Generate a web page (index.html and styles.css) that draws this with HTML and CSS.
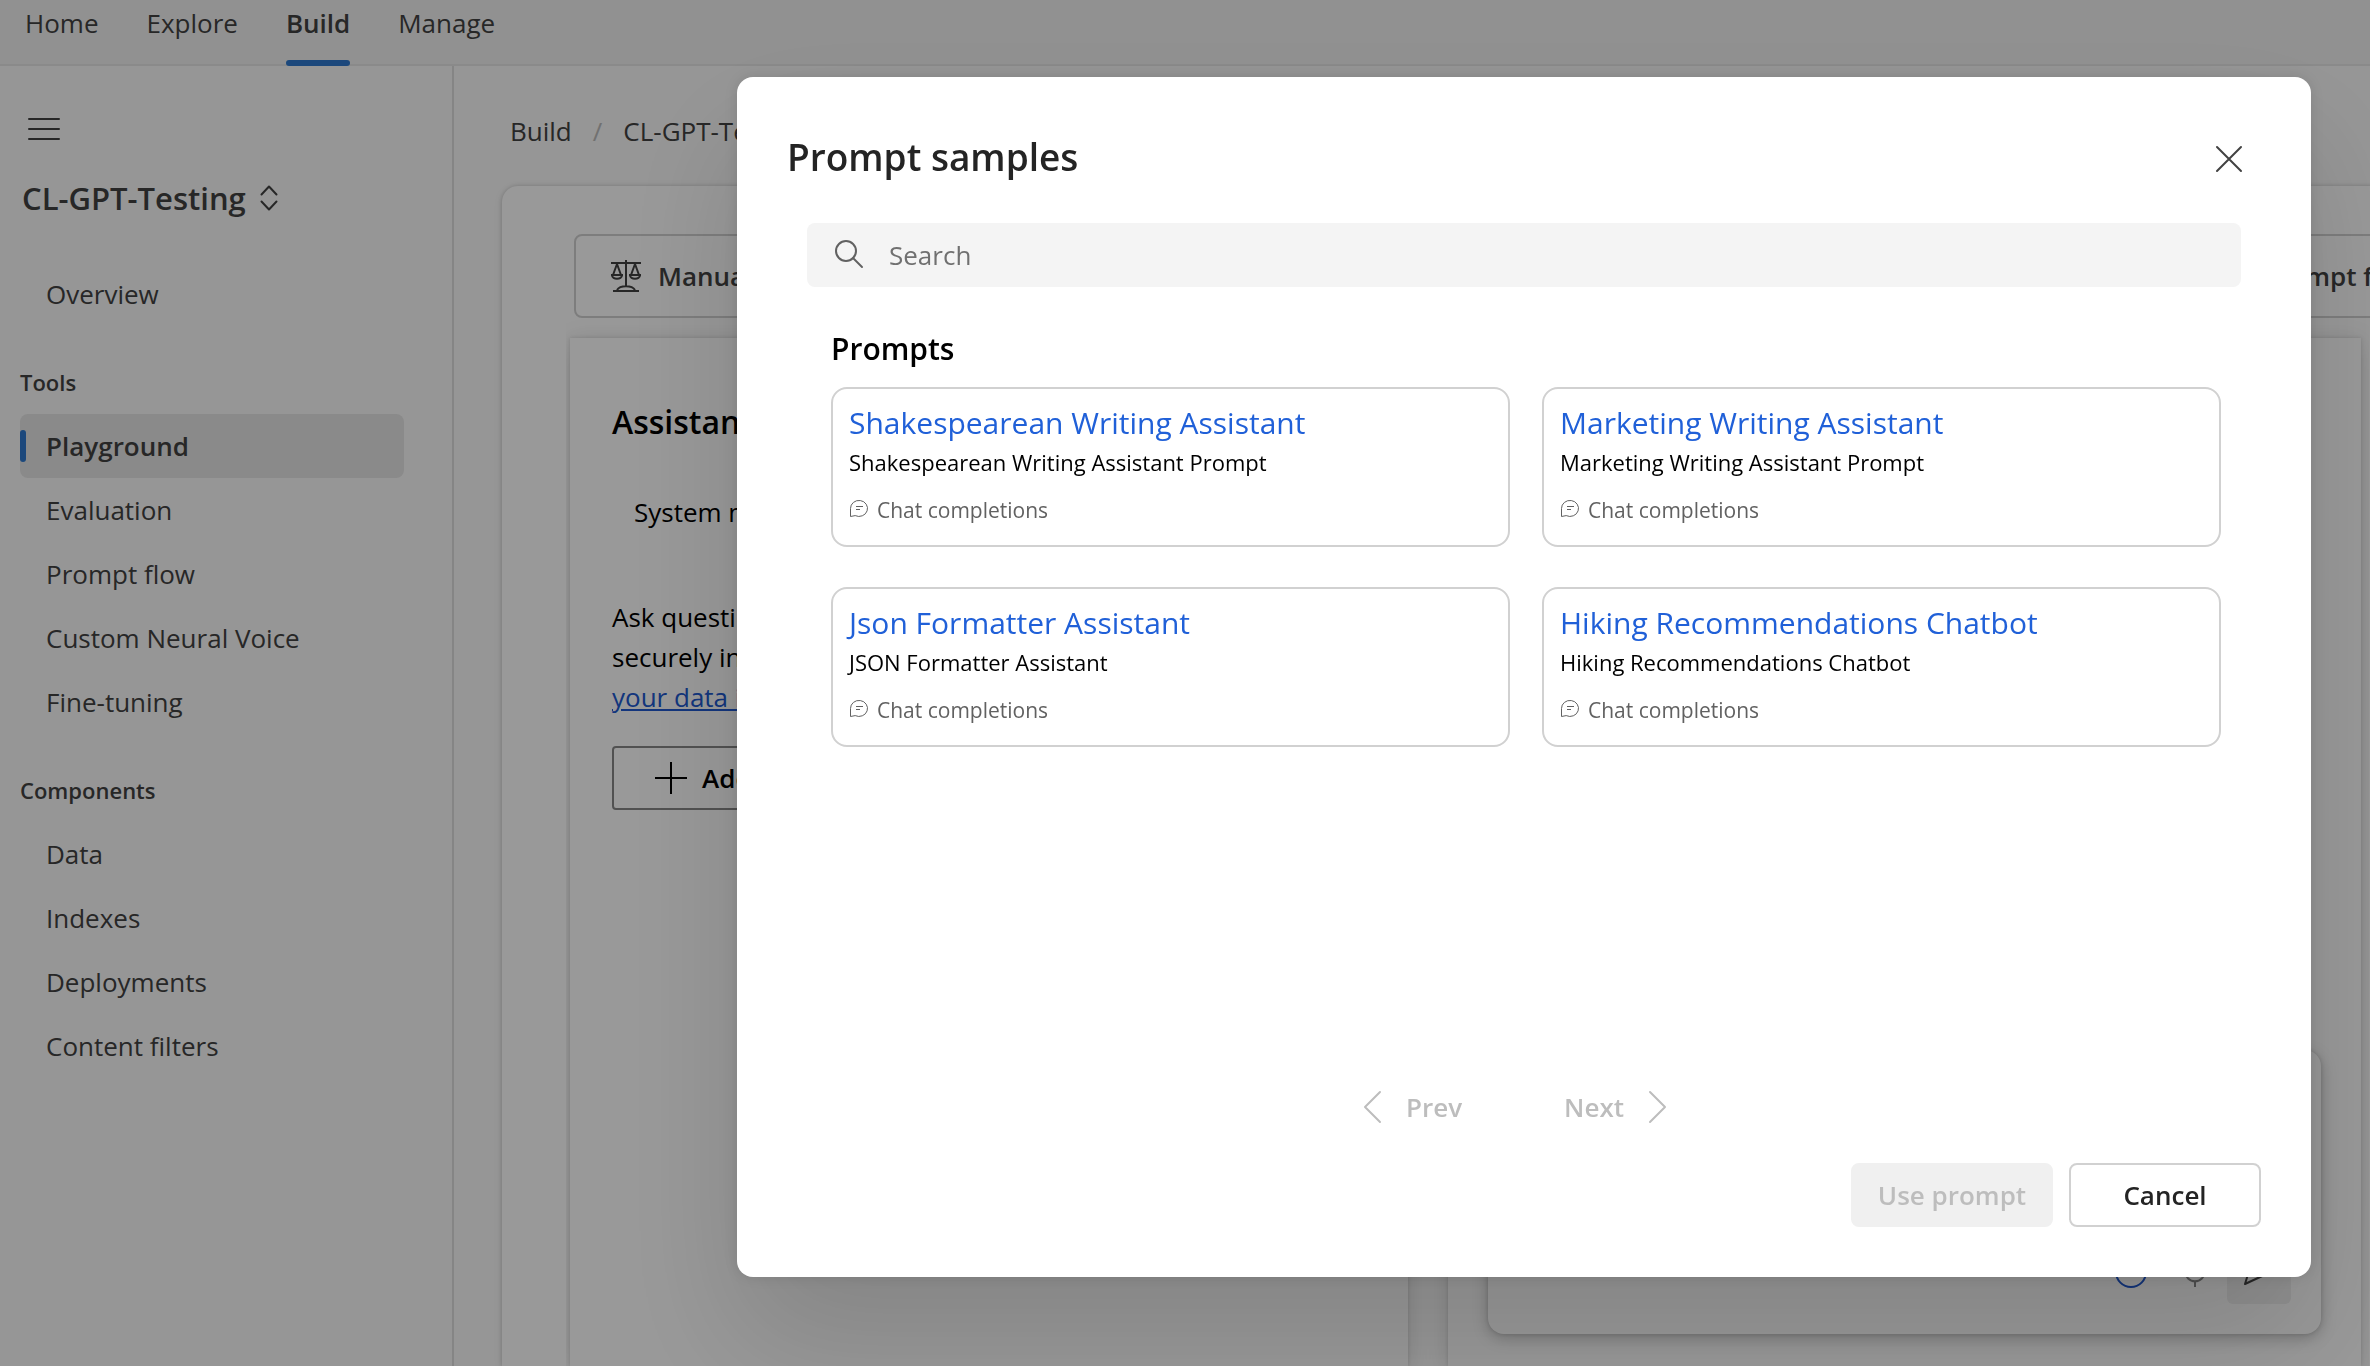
FILE: index.html
```
<!DOCTYPE html>
<html lang="en">
<head>
<meta charset="utf-8">
<title>Playground</title>
<link rel="stylesheet" href="styles.css">
</head>
<body>
<div class="app">
  <header class="topbar">
    <nav class="tabs" aria-label="Main">
      <a class="tab" href="#home">Home</a>
      <a class="tab" href="#explore">Explore</a>
      <a class="tab tab-active" href="#build" aria-current="page">Build</a>
      <a class="tab" href="#manage">Manage</a>
    </nav>
  </header>
  <div class="body">
    <aside class="sidebar">
      <button class="icon-button menu-button" type="button" aria-label="Menu">
        <svg width="34" height="24" viewBox="0 0 34 24" fill="none" stroke="currentColor" stroke-width="2" stroke-linecap="round"><path d="M2 2h30M2 12h30M2 22h30"/></svg>
      </button>
      <button class="project" type="button">
        <span>CL-GPT-Testing</span>
        <svg width="18" height="26" viewBox="0 0 18 26" fill="none" stroke="currentColor" stroke-width="2" stroke-linecap="round" stroke-linejoin="round"><path d="M1.500 9.500 9 1.500l7.500 8M1.500 16.500 9 24.500l7.500-8"/></svg>
      </button>
      <nav class="side-nav" aria-label="Project">
        <a class="side-link" href="#overview">Overview</a>
        <h2 class="side-heading">Tools</h2>
        <a class="side-link side-link-active" href="#playground" aria-current="page">Playground</a>
        <a class="side-link" href="#evaluation">Evaluation</a>
        <a class="side-link" href="#prompt-flow">Prompt flow</a>
        <a class="side-link" href="#voice">Custom Neural Voice</a>
        <a class="side-link" href="#fine-tuning">Fine-tuning</a>
        <h2 class="side-heading">Components</h2>
        <a class="side-link" href="#data">Data</a>
        <a class="side-link" href="#indexes">Indexes</a>
        <a class="side-link" href="#deployments">Deployments</a>
        <a class="side-link" href="#filters">Content filters</a>
      </nav>
    </aside>
    <main class="main">
      <nav class="breadcrumb" aria-label="Breadcrumb">
        <a href="#build">Build</a><span class="slash">/</span><a href="#project">CL-GPT-Testing</a>
      </nav>
      <div class="surface">
        <div class="toolbar">
          <button class="tool-button" type="button">
            <svg width="32" height="34" viewBox="0 0 32 34" fill="none" stroke="currentColor" stroke-width="2"><path d="M16 1v27M1 4h30M3 32h26M7 31c3-5 15-5 18 0M7 5 3 16M7 5l4 11M25 5l-4 11M25 5l4 11M1 16h12M19 16h12M2 16c0 5 10 5 10 0M20 16c0 5 10 5 10 0"/></svg>
            <span>Manual evaluation</span>
          </button>
          <button class="tool-button" type="button"><span>Prompt flow</span></button>
        </div>
        <div class="workspace">
          <section class="panel setup">
            <h2 class="panel-title">Assistant setup</h2>
            <div class="setup-tab">System message</div>
            <p class="setup-text">Ask questions about your own data, stored<br>securely in your subscription. Learn how<br><a href="#protected">your data is protected</a></p>
            <button class="add-button" type="button">
              <svg width="34" height="34" viewBox="0 0 34 34" stroke="currentColor" stroke-width="2"><path d="M17 1v32M1 17h32"/></svg>
              <span>Add data source</span>
            </button>
          </section>
          <section class="panel chat">
            <div class="composer">
              <svg class="composer-icon composer-blue" width="32" height="32" viewBox="0 0 32 32" fill="none" stroke="currentColor" stroke-width="2"><circle cx="16" cy="16" r="15"/></svg>
              <svg class="composer-icon" width="32" height="32" viewBox="0 0 32 32" fill="none" stroke="currentColor" stroke-width="2"><path d="M12 4h8v13h-8zM6 14c0 15 20 15 20 0M16 25v6"/></svg>
              <button class="send" type="button" aria-label="Send">
                <svg width="32" height="32" viewBox="0 0 32 32" fill="none" stroke="currentColor" stroke-width="2" stroke-linejoin="round"><path d="m2 3 28 12L2 28l4-13z"/></svg>
              </button>
            </div>
          </section>
        </div>
      </div>
    </main>
  </div>
</div>

<div class="overlay">
  <section class="modal" role="dialog" aria-modal="true" aria-labelledby="modal-title">
    <header class="modal-header">
      <h1 class="modal-title" id="modal-title">Prompt samples</h1>
      <button class="icon-button close-button" type="button" aria-label="Close">
        <svg width="28" height="28" viewBox="0 0 28 28" fill="none" stroke="currentColor" stroke-width="2" stroke-linecap="round"><path d="m2 2 24 24M26 2 2 26"/></svg>
      </button>
    </header>
    <label class="search">
      <svg width="30" height="30" viewBox="0 0 30 30" fill="none" stroke="currentColor" stroke-width="2" stroke-linecap="round"><circle cx="12" cy="11" r="10"/><path d="m19 18 9 9"/></svg>
      <input type="search" placeholder="Search" aria-label="Search">
    </label>
    <div class="samples">
      <h2 class="samples-title">Prompts</h2>
      <div class="cards">
        <article class="card">
          <a class="card-title" href="#shakespeare">Shakespearean Writing Assistant</a>
          <p class="card-text">Shakespearean Writing Assistant Prompt</p>
          <p class="card-kind"><svg width="20" height="20" viewBox="0 0 20 20" fill="none" stroke="currentColor" stroke-width="1"><path d="M1.500 16.500V8.500A8.500 8 0 1 1 6.200 15.600L1.500 16.500M7 6.500h7M7 9.500h4"/></svg>Chat completions</p>
        </article>
        <article class="card">
          <a class="card-title" href="#marketing">Marketing Writing Assistant</a>
          <p class="card-text">Marketing Writing Assistant Prompt</p>
          <p class="card-kind"><svg width="20" height="20" viewBox="0 0 20 20" fill="none" stroke="currentColor" stroke-width="1"><path d="M1.500 16.500V8.500A8.500 8 0 1 1 6.200 15.600L1.500 16.500M7 6.500h7M7 9.500h4"/></svg>Chat completions</p>
        </article>
        <article class="card">
          <a class="card-title" href="#json">Json Formatter Assistant</a>
          <p class="card-text">JSON Formatter Assistant</p>
          <p class="card-kind"><svg width="20" height="20" viewBox="0 0 20 20" fill="none" stroke="currentColor" stroke-width="1"><path d="M1.500 16.500V8.500A8.500 8 0 1 1 6.200 15.600L1.500 16.500M7 6.500h7M7 9.500h4"/></svg>Chat completions</p>
        </article>
        <article class="card">
          <a class="card-title" href="#hiking">Hiking Recommendations Chatbot</a>
          <p class="card-text">Hiking Recommendations Chatbot</p>
          <p class="card-kind"><svg width="20" height="20" viewBox="0 0 20 20" fill="none" stroke="currentColor" stroke-width="1"><path d="M1.500 16.500V8.500A8.500 8 0 1 1 6.200 15.600L1.500 16.500M7 6.500h7M7 9.500h4"/></svg>Chat completions</p>
        </article>
      </div>
    </div>
    <nav class="pager" aria-label="Pages">
      <button class="page-button" type="button" disabled>
        <svg width="20" height="34" viewBox="0 0 20 34" fill="none" stroke="currentColor" stroke-width="2" stroke-linecap="round" stroke-linejoin="round"><path d="M18 2 3 17l15 15"/></svg>
        <span>Prev</span>
      </button>
      <button class="page-button" type="button" disabled>
        <span>Next</span>
        <svg width="20" height="34" viewBox="0 0 20 34" fill="none" stroke="currentColor" stroke-width="2" stroke-linecap="round" stroke-linejoin="round"><path d="m2 2 15 15L2 32"/></svg>
      </button>
    </nav>
    <footer class="modal-footer">
      <button class="button button-disabled" type="button" disabled>Use prompt</button>
      <button class="button" type="button">Cancel</button>
    </footer>
  </section>
</div>
</body>
</html>
```

FILE: styles.css
```
* { box-sizing: border-box; }
body {
  margin: 0;
  height: 100vh;
  overflow: hidden;
  background: #fafafa;
  color: #424242;
  font: 26px/40px "Open Sans", "Noto Sans", sans-serif;
}
h1, h2, p { margin: 0; }
a { color: inherit; text-decoration: none; }
button { margin: 0; padding: 0; border: 0; background: none; color: inherit; font: inherit; text-align: left; white-space: nowrap; }
svg { display: block; flex: none; }

.app { display: flex; flex-direction: column; height: 100%; }
.topbar { flex: none; height: 66px; background: #f2f2f2; border-bottom: 2px solid #e6e6e6; }
.tabs { display: flex; gap: 48px; height: 66px; padding-left: 25px; }
.tab { display: flex; flex-direction: column; justify-content: space-between; padding-top: 3px; }
.tab::after { content: ""; height: 6px; border-radius: 3px; }
.tab-active { font-weight: 600; }
.tab-active::after { background: #2f79cf; }
.body { display: flex; flex: 1; min-height: 0; }

.sidebar { flex: none; width: 454px; padding: 31px 48px 0 20px; border-right: 2px solid #dedede; }
.icon-button { display: flex; align-items: center; justify-content: center; }
.menu-button { width: 48px; height: 64px; }
.project { display: flex; align-items: center; gap: 14px; height: 64px; margin: 5px 0 32px; padding-left: 2px; font-size: 31px; font-weight: 600; }
.side-nav { display: flex; flex-direction: column; }
.side-link { display: flex; align-items: center; height: 64px; padding-left: 26px; border-radius: 8px; }
.side-link-active { gap: 20px; padding-left: 0; background: #e6e6e6; font-weight: 600; }
.side-link-active::before { content: ""; width: 6px; height: 32px; border-radius: 3px; background: #2f79cf; }
.side-heading { padding-top: 24px; font-size: 22px; line-height: 64px; font-weight: 600; }

.main { display: flex; flex: 1; flex-direction: column; min-width: 0; padding: 45px 0 0 48px; }
.breadcrumb { display: flex; gap: 21px; padding-left: 8px; white-space: nowrap; }
.slash { color: #bdbdbd; }
.surface {
  display: flex; flex: 1; flex-direction: column;
  margin: 35px -40px 0 0; padding: 48px 49px 0 68px;
  border-radius: 16px 0 0 0; background: #fff;
  box-shadow: 0 0 4px rgba(0, 0, 0, .16), 0 2px 8px rgba(0, 0, 0, .1);
}
.toolbar { display: flex; justify-content: space-between; margin: 0 -92px 0 4px; }
.tool-button { display: flex; align-items: center; gap: 16px; height: 84px; padding: 0 34px; border: 2px solid #d1d1d1; border-radius: 8px; font-weight: 600; }
.workspace { display: grid; flex: 1; grid-template-columns: 838fr 913fr; gap: 40px; margin: 0 -8px 0 -4px; padding: 20px 8px 0 4px; overflow: hidden; }
.panel { background: #fff; box-shadow: 0 0 4px rgba(0, 0, 0, .14), 0 4px 24px rgba(0, 0, 0, .14); }
.setup { padding: 60px 42px; color: #000; white-space: nowrap; }
.panel-title { font-size: 32px; line-height: 48px; font-weight: 600; }
.setup-tab { margin: 46px 0 65px 22px; }
.setup-text a { color: #2059d0; text-decoration: underline; }
.add-button { display: flex; align-items: center; gap: 14px; height: 64px; margin-top: 29px; padding: 0 40px; border: 2px solid #888; border-radius: 4px; font-weight: 600; }
.chat { display: flex; flex-direction: column; justify-content: flex-end; padding: 32px 40px; }
.composer { display: flex; align-items: flex-end; justify-content: flex-end; gap: 32px; height: 284px; padding: 30px; border-radius: 16px; background: #fff; box-shadow: 0 0 4px rgba(0, 0, 0, .14), 0 4px 16px rgba(0, 0, 0, .24); }
.composer-icon { margin-bottom: 16px; color: #888; }
.composer-blue { color: #2059d0; }
.send { display: flex; align-items: center; justify-content: center; width: 64px; height: 64px; margin-left: -16px; border-radius: 6px; background: #f0f0f0; }

.overlay { position: fixed; inset: 0; display: flex; padding: 77px 59px 89px 737px; background: rgba(0, 0, 0, .4); }
.modal {
  display: flex; flex: 1; flex-direction: column; min-width: 0;
  padding: 50px; border-radius: 16px; background: #fff;
  box-shadow: 0 0 16px rgba(0, 0, 0, .12), 0 64px 128px rgba(0, 0, 0, .14);
}
.modal-header { display: flex; align-items: center; justify-content: space-between; height: 60px; }
.modal-title { color: #242424; font-size: 37px; line-height: 60px; font-weight: 600; }
.close-button { width: 64px; height: 64px; padding-top: 4px; }
.search { display: flex; align-items: center; gap: 25px; height: 64px; margin: 36px 20px 0; padding: 0 27px; border-radius: 8px; background: #f4f4f4; color: #616161; }
.search input { flex: 1; min-width: 0; padding: 0; border: 0; outline: 0; background: none; font: inherit; color: #242424; }
.search input::placeholder { color: #707070; opacity: 1; }
.samples { flex: 1; margin: 40px 40px 0 44px; }
.samples-title { color: #000; font-size: 30px; line-height: 44px; font-weight: 600; }
.cards { display: grid; grid-template-columns: 1fr 1fr; gap: 40px 32px; margin-top: 16px; }
.card { min-width: 0; height: 160px; padding: 12px 16px; border: 2px solid #d1d1d1; border-radius: 16px; }
.card-title { display: block; color: #2060d8; font-size: 30px; line-height: 44px; }
.card-text { color: #000; font-size: 22px; line-height: 34px; }
.card-kind { display: flex; align-items: center; gap: 8px; margin-top: 13px; color: #616161; font-size: 21px; line-height: 36px; }
.pager { display: flex; justify-content: center; gap: 102px; margin: 0 0 24px; padding-right: 18px; }
.page-button { display: flex; align-items: center; gap: 24px; height: 64px; color: #bdbdbd; font-weight: 600; }
.modal-footer { display: flex; justify-content: flex-end; gap: 16px; }
.button { min-width: 192px; height: 64px; padding: 0 24px; border: 2px solid #d1d1d1; border-radius: 8px; color: #242424; font-weight: 600; text-align: center; }
.button-disabled { min-width: 202px; border-color: #f0f0f0; background: #f0f0f0; color: #bdbdbd; }
```
